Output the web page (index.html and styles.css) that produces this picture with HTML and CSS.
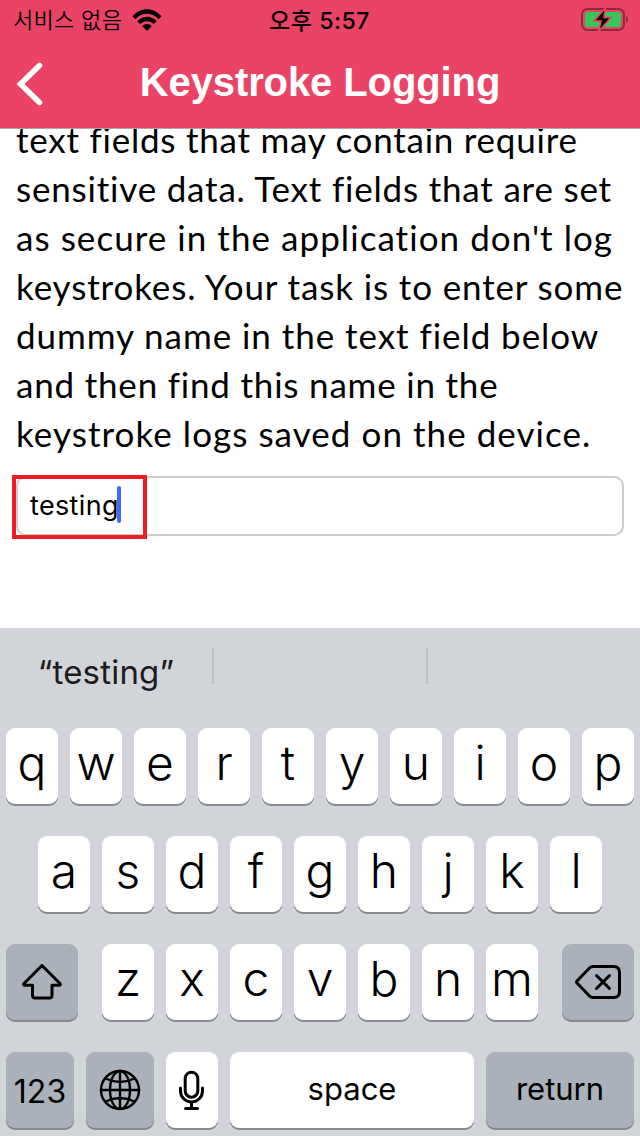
FILE: index.html
```html
<!DOCTYPE html>
<html lang="en">
<head>
  <meta charset="UTF-8">
  <meta name="viewport" content="width=device-width, initial-scale=1.0">
  <title>Keystroke Logging</title>
  <link rel="stylesheet" href="styles.css">
</head>
<body>
  <header>
    <div class="status-bar">
      <div class="carrier">
        <span lang="ko">서비스 없음</span>
        <svg class="wifi" width="30" height="22" viewBox="0 0 30 22">
          <path d="M0.5 7.2C8.5-2.2 21.500-2.200 29.500 7.200L26.600 10.200C20 3 10 3 3.400 10.200Z"/>
          <path d="M5.300 12.200C10.500 6.200 19.500 6.200 24.700 12.200L21.800 15.100C18.200 11.200 11.800 11.200 8.200 15.100Z"/>
          <path d="M10.200 17.100C12.800 14.300 17.200 14.300 19.800 17.100L15 22Z"/>
        </svg>
      </div>
      <div class="time" lang="ko">오후 5:57</div>
      <svg class="battery" width="50" height="26" viewBox="0 0 50 26">
        <rect x="3" y="2" width="42" height="21" rx="5.500" fill="none" stroke="#8c2b40" stroke-width="2"/>
        <path d="M47 9Q49 10 49 12.500T47 16Z" fill="#8c2b40"/>
        <rect x="6" y="5" width="36" height="15" rx="3" fill="#34c759"/>
        <path d="M26.500 1L15 14H22L19.500 24.500L32 10.500H25Z" fill="#000" stroke="#eb4365" stroke-width="1.600"/>
      </svg>
    </div>
    <div class="nav-bar">
      <svg class="back" width="28" height="44" viewBox="0 0 28 44">
        <path d="M23.500 3.500L4.500 22L23.500 40.500"/>
      </svg>
      <h1>Keystroke Logging</h1>
    </div>
  </header>

  <main>
    <p class="description">
      <span class="line l1">text fields that may contain require</span>
      <span class="line l2">sensitive data. Text fields that are set</span>
      <span class="line l3">as secure in the application don't log</span>
      <span class="line l4">keystrokes. Your task is to enter some</span>
      <span class="line l5">dummy name in the text field below</span>
      <span class="line l6">and then find this name in the</span>
      <span class="line l7">keystroke logs saved on the device.</span>
    </p>
    <div class="text-field">
      <span>testing</span><i class="caret"></i>
      <div class="highlight"></div>
    </div>
  </main>

  <div class="keyboard">
    <div class="suggestions">
      <div class="suggestion">“testing”</div>
      <div class="suggestion"></div>
      <div class="suggestion"></div>
    </div>
    <div class="row">
      <div class="key">q</div>
      <div class="key">w</div>
      <div class="key">e</div>
      <div class="key">r</div>
      <div class="key">t</div>
      <div class="key">y</div>
      <div class="key">u</div>
      <div class="key">i</div>
      <div class="key">o</div>
      <div class="key">p</div>
    </div>
    <div class="row">
      <div class="key">a</div>
      <div class="key">s</div>
      <div class="key">d</div>
      <div class="key">f</div>
      <div class="key">g</div>
      <div class="key">h</div>
      <div class="key">j</div>
      <div class="key">k</div>
      <div class="key">l</div>
    </div>
    <div class="row">
      <div class="key dark shift">
        <svg width="40" height="36" viewBox="0 0 40 36">
          <path d="M20 1.500L38 19.500Q39 21.300 37 21.300H30V31.500Q30 34 27.500 34H13Q10.500 34 10.500 31.500V21.300H3Q1 21.300 2 19.500Z"/>
        </svg>
      </div>
      <div class="key">z</div>
      <div class="key">x</div>
      <div class="key">c</div>
      <div class="key">v</div>
      <div class="key">b</div>
      <div class="key">n</div>
      <div class="key">m</div>
      <div class="key dark delete">
        <svg width="46" height="34" viewBox="0 0 46 34">
          <path d="M18 1.500H38.500Q44.500 1.500 44.500 7.500V26.500Q44.500 32.500 38.500 32.500H18Q16 32.500 14.500 31L2 18Q1.200 17 2 16L14.500 3Q16 1.500 18 1.500Z"/>
          <path d="M21.500 10.500L34.500 23.500M34.500 10.500L21.500 23.500"/>
        </svg>
      </div>
    </div>
    <div class="row">
      <div class="key dark wide label numbers">123</div>
      <div class="key dark wide globe">
        <svg width="42" height="42" viewBox="0 0 42 42">
          <circle cx="21" cy="21" r="19"/>
          <ellipse cx="21" cy="21" rx="10" ry="19"/>
          <path d="M21 2V40M2 21H40M6.500 9.500Q21 16.500 35.500 9.500M6.500 32.500Q21 25.500 35.500 32.500"/>
        </svg>
      </div>
      <div class="key mic">
        <svg width="26" height="42" viewBox="0 0 26 42">
          <rect x="6.200" y="3.200" width="12.600" height="25" rx="6.300"/>
          <path d="M1.500 19V22A11 11 0 0 0 23.500 22V19M12.500 33V39M6.500 39.500H18.500"/>
        </svg>
      </div>
      <div class="key label space">space</div>
      <div class="key dark label return">return</div>
    </div>
  </div>
</body>
</html>
```
FILE: styles.css
```css
* {
  box-sizing: border-box;
}
body {
  margin: 0;
  width: 640px;
  height: 1136px;
  overflow: hidden;
  background: #fff;
  color: #000;
  font-family: Inter, "Noto Sans CJK KR", sans-serif;
}
header {
  height: 129px;
  background: #eb4365;
  border-bottom: 1px solid #b0a5a8;
}
.status-bar {
  display: grid;
  grid-template-columns: 1fr auto 1fr;
  height: 40px;
  padding: 0 11px 0 13px;
  align-items: center;
}
.carrier {
  display: flex;
  align-items: center;
  gap: 10px;
  font-size: 22px;
  font-weight: 350;
  line-height: 30px;
  letter-spacing: 0.3px;
}
.time {
  margin: -2px 3px 0 0;
  font-size: 23px;
  font-weight: 500;
  letter-spacing: 0.6px;
}
.battery {
  justify-self: end;
}
.nav-bar {
  display: grid;
  grid-template-columns: 48px 1fr 48px;
  align-items: center;
  height: 88px;
}
.back {
  margin-left: 16px;
  fill: none;
  stroke: #fff;
  stroke-width: 5.500;
  stroke-linecap: round;
}
h1 {
  margin: -4px 0 0;
  color: #fff;
  font-family: "Liberation Sans", Arial, sans-serif;
  font-size: 40px;
  line-height: 46px;
  letter-spacing: -0.1px;
  text-align: center;
  white-space: nowrap;
}
main {
  height: 499px;
  padding: 0 16px;
  overflow: hidden;
}
.description {
  margin: -14px 0 0;
  font-family: Lato, sans-serif;
  font-size: 35px;
  line-height: 49px;
}
.line {
  display: block;
  white-space: nowrap;
}
.l1 {
  letter-spacing: 0.76px;
}
.l2,
.l6 {
  letter-spacing: 0.8px;
}
.l3,
.l7 {
  letter-spacing: 1.05px;
}
.l4 {
  letter-spacing: 0.87px;
}
.l5 {
  letter-spacing: 0.95px;
}
.text-field {
  position: relative;
  display: flex;
  align-items: center;
  height: 60px;
  margin-top: 18px;
  padding: 0 0 2px 12px;
  border: 2px solid #ccc;
  border-radius: 10px;
  font-size: 27px;
  letter-spacing: 0.35px;
}
.caret {
  width: 4px;
  height: 37px;
  margin: 0 0 1px -2px;
  border-radius: 2px;
  background: #426bf2;
}
.highlight {
  position: absolute;
  left: -6px;
  top: -3px;
  width: 135px;
  height: 64px;
  border: 4px solid #ec1c24;
}
.keyboard {
  height: 508px;
  background: #d1d4d9;
}
.suggestions {
  display: grid;
  grid-template-columns: 214px 214px 1fr;
  height: 100px;
  padding-top: 20px;
}
.suggestion {
  height: 36px;
  font-size: 33px;
  line-height: 49px;
  letter-spacing: 0.2px;
  color: #1c1c1e;
  text-align: center;
  border-right: 2px solid #bbbec3;
}
.suggestion:last-child {
  border-right: none;
}
.row {
  display: flex;
  justify-content: center;
  gap: 12px;
  height: 76px;
  margin-bottom: 32px;
}
.key {
  display: flex;
  justify-content: center;
  align-items: center;
  width: 52px;
  height: 76px;
  padding-bottom: 8px;
  border-radius: 9px;
  background: #fff;
  box-shadow: 0 2px 0 #888a8e;
  font-size: 48px;
  font-weight: 300;
}
.key svg {
  flex: none;
  fill: none;
  stroke: #000;
  stroke-width: 3;
  stroke-linecap: round;
  stroke-linejoin: round;
}
.dark {
  background: #abb1bb;
}
.shift,
.delete {
  width: 72px;
  padding: 0;
}
.shift {
  margin-right: 12px;
}
.delete {
  margin-left: 12px;
}
.wide {
  width: 68px;
}
.label {
  font-size: 31px;
  font-weight: 400;
  padding: 0 0 4px;
}
.numbers {
  padding: 3px 0 0;
  font-size: 32px;
}
.globe,
.mic {
  padding: 0;
}
.globe svg {
  stroke-width: 2.400;
}
.space {
  width: 244px;
}
.return {
  width: 148px;
}
```
